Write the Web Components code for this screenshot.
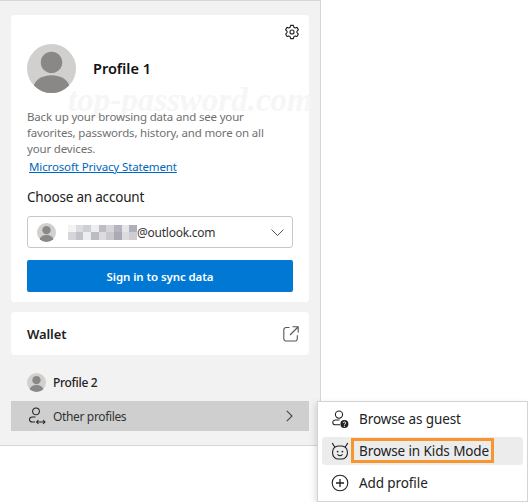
<!DOCTYPE html>
<html lang="en">
<head>
<meta charset="UTF-8" />
<title>Profile flyout</title>
<style>
  html, body { margin: 0; padding: 0; background: #fff; }
  body { width: 528px; height: 502px; position: relative; overflow: hidden; font-family: "Noto Sans", "Open Sans", Arial, sans-serif; }
</style>
</head>
<body>
<profile-panel>
  <profile-card></profile-card>
  <wallet-card></wallet-card>
  <profile-row></profile-row>
  <other-profiles></other-profiles>
</profile-panel>
<flyout-menu>
  <menu-item icon="guest">Browse as guest</menu-item>
  <menu-item icon="kids" active>Browse in Kids Mode</menu-item>
  <menu-item icon="add">Add profile</menu-item>
</flyout-menu>

<script>
  const AVATAR = `<svg viewBox="0 0 48 48" width="100%" height="100%"><defs><clipPath id="c"><circle cx="24" cy="24" r="24"/></clipPath></defs><g clip-path="url(#c)"><rect width="48" height="48" fill="#d2d0ce"/><circle cx="24" cy="18" r="10.5" fill="#8a8886"/><ellipse cx="24" cy="43" rx="17.5" ry="12.5" fill="#8a8886"/></g></svg>`;

  const ICONS = {
    guest: `<svg viewBox="0 0 20 20" width="20" height="20" fill="none" stroke="#222" stroke-width="1.1"><circle cx="9" cy="5.6" r="3.6"/><path d="M9.5 11H5.6C4 11 2.8 12 2.8 13.4S4 15.8 5.6 15.8H10"/><circle cx="14.4" cy="15" r="4" fill="#222" stroke="none"/><path d="M13.2 14c0-1.5 2.5-1.5 2.5 0 0 1-1.3 1-1.3 1.9" stroke="#fff" stroke-width=".9"/><circle cx="14.4" cy="17.2" r=".6" fill="#fff" stroke="none"/></svg>`,
    kids: `<svg viewBox="0 0 20 20" width="20" height="20" fill="none" stroke="#222" stroke-width="1.1" stroke-linecap="round"><rect x="2.6" y="5" width="14.8" height="13" rx="5.8"/><path d="M4.6 5.8 2.4 2.4M15.4 5.8l2.2-3.4"/><circle cx="7.6" cy="10.6" r=".9" fill="#222" stroke="none"/><circle cx="12.4" cy="10.6" r=".9" fill="#222" stroke="none"/><path d="M7.8 13.6c1.2 1.1 3.2 1.1 4.4 0"/></svg>`,
    add: `<svg viewBox="0 0 20 20" width="20" height="20" fill="none" stroke="#222" stroke-width="1.1"><circle cx="10" cy="10" r="7.8"/><path d="M10 6v8M6 10h8" stroke-width="1.3"/></svg>`
  };

  class ProfilePanel extends HTMLElement {
    constructor() {
      super();
      this.attachShadow({ mode: 'open' }).innerHTML = `
        <style>
          :host { display: flex; flex-direction: column; box-sizing: border-box; width: 321px; height: 446px;
            padding: 14px 11px 0 11px; background: #f2f2f2; border: solid #d6d6d6; border-width: 1px 1px 1px 0; }
        </style>
        <slot></slot>`;
    }
  }
  customElements.define('profile-panel', ProfilePanel);

  class ProfileCard extends HTMLElement {
    constructor() {
      super();
      const blocks = ['#f4f3f4','#dcdbdd','#cfcfd3','#eeeef0','#bdbdc4','#d6d6da','#b4b5be','#e6e6e8','#aeb0ba','#d6d6da','#c2c2c9','#eceded','#bcbdc3','#dcdce0','#c8c8ce','#a9aab3','#dcdce0','#cdcdd2']
        .map(c => `<i style="background:${c}"></i>`).join('');
      this.attachShadow({ mode: 'open' }).innerHTML = `
        <style>
          :host { display: block; position: relative; box-sizing: border-box; height: 287px; padding: 28px 16px 0; background: #fff; border-radius: 4px; color: #1a1a1a; }
          .gear { position: absolute; top: 9px; right: 9px; width: 16px; height: 16px; }
          .head { display: flex; align-items: center; gap: 17px; height: 50px; }
          .avatar { width: 49px; height: 49px; }
          .name { font-size: 14.5px; font-weight: 600; color: #111; }
          p { position: relative; width: 245px; margin: 16px 0 0; font-size: 11.5px; line-height: 16px; color: #707070; letter-spacing: -.17px; }
          a { display: block; margin: 2px 0 0 2px; font-size: 11.5px; line-height: 16px; color: #0067c0; text-decoration: underline; letter-spacing: -.13px; }
          .choose { margin-top: 12px; font-size: 13.5px; line-height: 20px; color: #222; letter-spacing: -.2px; }
          .select { display: flex; align-items: center; box-sizing: border-box; height: 32px; margin-top: 9px; padding: 0 8px 0 9px; border: 1px solid #c8c8c8; border-radius: 3px; }
          .select .pic { width: 19px; height: 19px; margin-right: 12px; }
          .mosaic { display: grid; grid-template-columns: repeat(9, 1fr); grid-template-rows: repeat(2, 7.5px); width: 69px; }
          .mosaic i { display: block; }
          .mail { font-size: 12px; color: #333; letter-spacing: -.25px; }
          .chev { margin-left: auto; }
          .btn { display: flex; align-items: center; justify-content: center; height: 32px; margin-top: 12px; background: #0078d4; border-radius: 2px; color: #fff; font-size: 11.5px; font-weight: 600; letter-spacing: -.1px; }
          .mark { position: absolute; left: 57px; top: 75px; font: italic bold 33px/20px "Liberation Serif", serif; color: #f6f6f6; white-space: nowrap; pointer-events: none; }
        </style>
        <svg class="gear" viewBox="0 0 18 18" fill="none" stroke="#222" stroke-width="1.25" stroke-linejoin="round">
          <path d="M7.4 1.5h3.2l.5 2.2 1.4.8 2.1-.7 1.6 2.8-1.6 1.5v1.7l1.6 1.5-1.6 2.8-2.1-.7-1.4.8-.5 2.2H7.4l-.5-2.2-1.4-.8-2.1.7-1.6-2.8 1.6-1.5V8.1L1.8 6.6l1.6-2.8 2.1.7 1.4-.8z"/>
          <circle cx="9" cy="9" r="2.3"/>
        </svg>
        <div class="mark">top-password.com</div>
        <div class="head"><div class="avatar">${AVATAR}</div><span class="name">Profile 1</span></div>
        <p>Back up your browsing data and see your favorites, passwords, history, and more on all your devices.</p>
        <a href="#">Microsoft Privacy Statement</a>
        <div class="choose">Choose an account</div>
        <div class="select">
          <div class="pic">${AVATAR}</div>
          <div class="mosaic">${blocks}</div>
          <span class="mail">@outlook.com</span>
          <svg class="chev" width="13" height="7" viewBox="0 0 13 7" fill="none" stroke="#555" stroke-width="1"><path d="M.5.5l6 6 6-6"/></svg>
        </div>
        <div class="btn">Sign in to sync data</div>`;
    }
  }
  customElements.define('profile-card', ProfileCard);

  class WalletCard extends HTMLElement {
    constructor() {
      super();
      this.attachShadow({ mode: 'open' }).innerHTML = `
        <style>
          :host { display: flex; align-items: center; justify-content: space-between; box-sizing: border-box; height: 43px; margin-top: 10px; padding: 0 10px 0 16px; background: #fff; border-radius: 4px; }
          span { padding-top: 1px; font-size: 13px; font-weight: 600; color: #222; letter-spacing: -.1px; }
        </style>
        <span>Wallet</span>
        <svg width="16" height="16" viewBox="0 0 16 16" fill="none" stroke="#555" stroke-width="1.1"><path d="M6.5 1.5H3.2A2.4 2.4 0 0 0 .8 3.9v8.7A2.4 2.4 0 0 0 3.2 15h8.7a2.4 2.4 0 0 0 2.4-2.4V9.3M9.5.8h5.7v5.7M15 1 7 9"/></svg>`;
    }
  }
  customElements.define('wallet-card', WalletCard);

  class ProfileRow extends HTMLElement {
    constructor() {
      super();
      this.attachShadow({ mode: 'open' }).innerHTML = `
        <style>
          :host { display: flex; align-items: center; gap: 7px; height: 20px; margin-top: 17px; padding-left: 16px; }
          .pic { width: 19px; height: 19px; }
          span { font-size: 12px; font-weight: 500; color: #222; letter-spacing: -.3px; }
        </style>
        <div class="pic">${AVATAR}</div><span>Profile 2</span>`;
    }
  }
  customElements.define('profile-row', ProfileRow);

  class OtherProfiles extends HTMLElement {
    constructor() {
      super();
      this.attachShadow({ mode: 'open' }).innerHTML = `
        <style>
          :host { display: flex; align-items: center; box-sizing: border-box; height: 30px; margin-top: 9px; padding: 0 16px 0 17px; background: #cfcfcf; }
          span { margin-left: 7px; font-size: 12px; color: #333; letter-spacing: -.35px; }
          .chev { margin-left: auto; }
        </style>
        <svg width="18" height="18" viewBox="0 0 18 18" fill="none" stroke="#222" stroke-width="1.05"><circle cx="8" cy="4.4" r="3.4"/><path d="M7.5 10H4.4C2.8 10 1.5 11 1.5 12.4S2.8 15 4.4 15H7M8.5 15h8.5M10.5 13l-2 2 2 2M15 13l2 2-2 2"/></svg>
        <span>Other profiles</span>
        <svg class="chev" width="7" height="12" viewBox="0 0 7 12" fill="none" stroke="#444" stroke-width="1.1"><path d="M.8.8 6 6 .8 11.2"/></svg>`;
    }
  }
  customElements.define('other-profiles', OtherProfiles);

  class FlyoutMenu extends HTMLElement {
    constructor() {
      super();
      this.attachShadow({ mode: 'open' }).innerHTML = `
        <style>
          :host { position: absolute; left: 317px; top: 401px; box-sizing: border-box; width: 211px; height: 101px; padding: 3px 4px; display: flex; flex-direction: column; gap: 4px;
            background: #fff; border: 1px solid #d4d4d4; box-shadow: -2px 2px 6px rgba(0,0,0,.13); }
        </style>
        <slot></slot>`;
    }
  }
  customElements.define('flyout-menu', FlyoutMenu);

  class MenuItem extends HTMLElement {
    constructor() {
      super();
      this.attachShadow({ mode: 'open' }).innerHTML = `
        <style>
          :host { display: flex; align-items: center; gap: 9px; box-sizing: border-box; height: 28px; padding-left: 8px; border-radius: 4px; }
          :host([active]) { background: #ececec; }
          .t { position: relative; font-size: 13.5px; line-height: 20px; color: #222; letter-spacing: -.1px; white-space: nowrap; }
          :host([active]) .t::after { content: ""; position: absolute; left: -8px; right: -5px; top: -3px; bottom: -2px; border: 3px solid #f7952e; }
          .i { display: flex; width: 20px; height: 20px; }
        </style>
        <span class="i">${ICONS[this.getAttribute('icon')] || ''}</span>
        <span class="t"><slot></slot></span>`;
    }
  }
  customElements.define('menu-item', MenuItem);
</script>
</body>
</html>
